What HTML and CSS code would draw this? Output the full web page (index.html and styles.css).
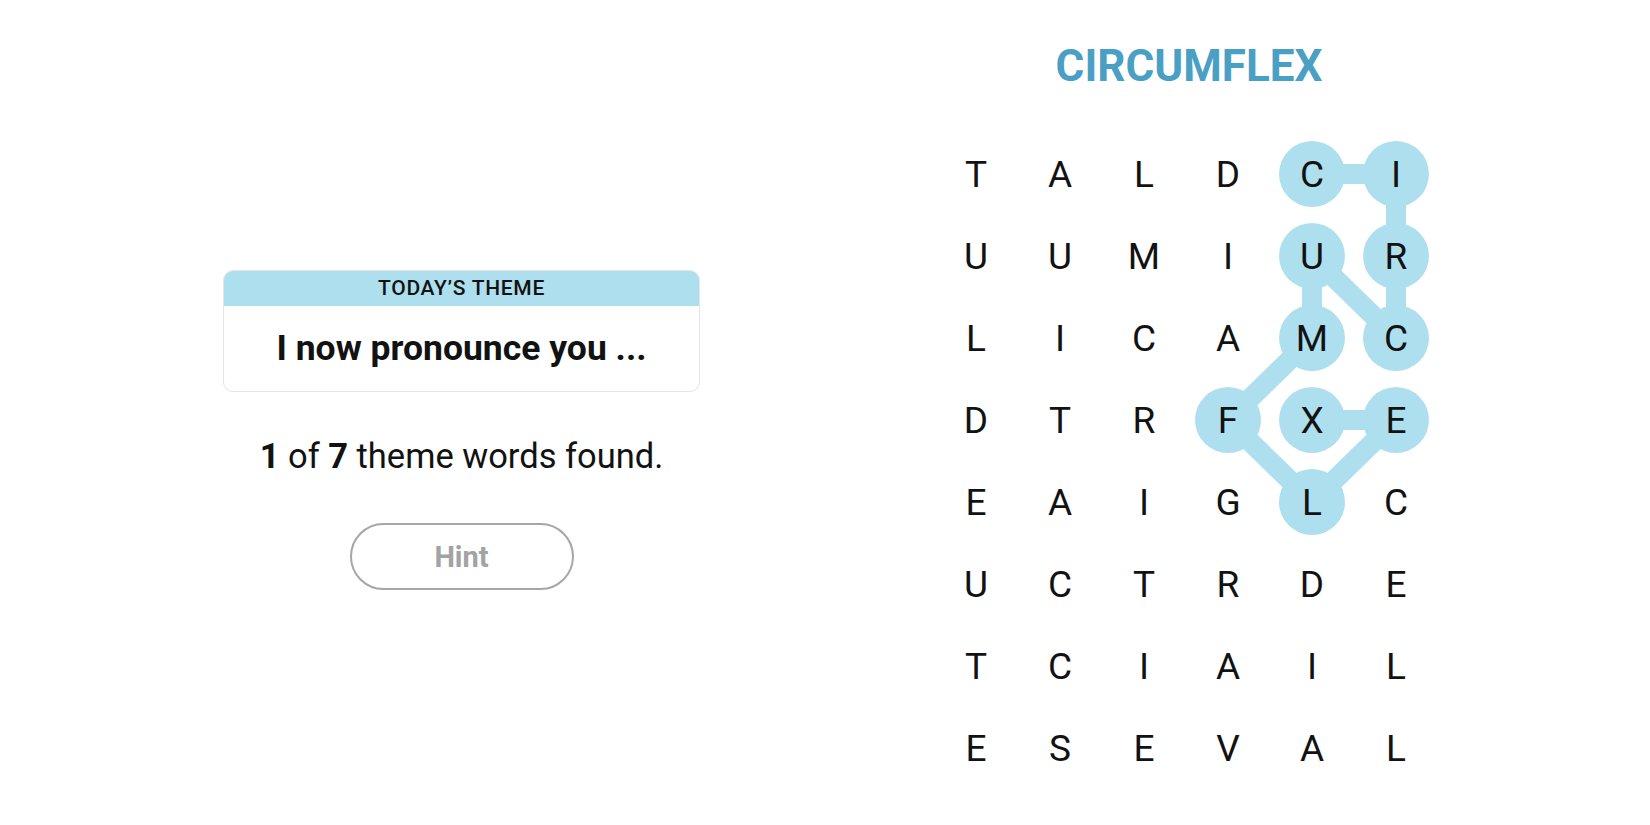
FILE: index.html
```html
<!DOCTYPE html>
<html lang="en">
<head>
<meta charset="utf-8">
<title>Strands</title>
<link rel="stylesheet" href="styles.css">
</head>
<body>
<main class="page">
  <section class="side">
    <div class="theme-card">
      <div class="theme-head">TODAY’S THEME</div>
      <div class="theme-body">I now pronounce you ...</div>
    </div>
    <p class="progress"><b>1</b> of <b>7</b> theme words found.</p>
    <button class="hint" type="button">Hint</button>
  </section>
  <section class="board">
    <h1 class="found-word">CIRCUMFLEX</h1>
    <div class="grid">
      <svg class="links" width="504" height="656" viewBox="0 0 504 656" aria-hidden="true">
        <polyline points="378,41 462,41 462,123 462,205 378,123 378,205 294,287 378,369 462,287 378,287" fill="none" stroke="#aedfee" stroke-width="20" stroke-linejoin="miter"/>
      </svg>
      <div class="cell"><span>T</span></div>
      <div class="cell"><span>A</span></div>
      <div class="cell"><span>L</span></div>
      <div class="cell"><span>D</span></div>
      <div class="cell on"><span>C</span></div>
      <div class="cell on"><span>I</span></div>

      <div class="cell"><span>U</span></div>
      <div class="cell"><span>U</span></div>
      <div class="cell"><span>M</span></div>
      <div class="cell"><span>I</span></div>
      <div class="cell on"><span>U</span></div>
      <div class="cell on"><span>R</span></div>

      <div class="cell"><span>L</span></div>
      <div class="cell"><span>I</span></div>
      <div class="cell"><span>C</span></div>
      <div class="cell"><span>A</span></div>
      <div class="cell on"><span>M</span></div>
      <div class="cell on"><span>C</span></div>

      <div class="cell"><span>D</span></div>
      <div class="cell"><span>T</span></div>
      <div class="cell"><span>R</span></div>
      <div class="cell on"><span>F</span></div>
      <div class="cell on"><span>X</span></div>
      <div class="cell on"><span>E</span></div>

      <div class="cell"><span>E</span></div>
      <div class="cell"><span>A</span></div>
      <div class="cell"><span>I</span></div>
      <div class="cell"><span>G</span></div>
      <div class="cell on"><span>L</span></div>
      <div class="cell"><span>C</span></div>

      <div class="cell"><span>U</span></div>
      <div class="cell"><span>C</span></div>
      <div class="cell"><span>T</span></div>
      <div class="cell"><span>R</span></div>
      <div class="cell"><span>D</span></div>
      <div class="cell"><span>E</span></div>

      <div class="cell"><span>T</span></div>
      <div class="cell"><span>C</span></div>
      <div class="cell"><span>I</span></div>
      <div class="cell"><span>A</span></div>
      <div class="cell"><span>I</span></div>
      <div class="cell"><span>L</span></div>

      <div class="cell"><span>E</span></div>
      <div class="cell"><span>S</span></div>
      <div class="cell"><span>E</span></div>
      <div class="cell"><span>V</span></div>
      <div class="cell"><span>A</span></div>
      <div class="cell"><span>L</span></div>
    </div>
  </section>
</main>
</body>
</html>
```
FILE: styles.css
```css
* { box-sizing: border-box; }

html, body {
  margin: 0;
  padding: 0;
  background: #ffffff;
}

body {
  font-family: Roboto, "Liberation Sans", Arial, sans-serif;
  color: #121212;
  width: 1650px;
  height: 825px;
  overflow: hidden;
}

.page {
  display: flex;
  align-items: flex-start;
  padding-left: 223px;
  gap: 234px;
}

.side {
  width: 477px;
  margin-top: 270px;
  display: flex;
  flex-direction: column;
  align-items: center;
}

.theme-card {
  width: 477px;
  border: 1px solid #e4e4e4;
  border-radius: 10px;
  overflow: hidden;
  text-align: center;
}

.theme-head {
  background: #aedfee;
  height: 35px;
  line-height: 35px;
  font-size: 21px;
  font-weight: 500;
  letter-spacing: 0.7px;
  color: #121212;
}

.theme-body {
  padding: 22px 10px 22px;
  font-size: 35.5px;
  line-height: 41px;
  font-weight: 700;
  color: #121212;
}

.progress {
  margin: 44px 0 0;
  font-size: 34.5px;
  line-height: 41px;
  color: #121212;
}

.progress b { font-weight: 700; }

.hint {
  margin-top: 46px;
  width: 224px;
  height: 67px;
  border: 2px solid #a6a6a6;
  border-radius: 34px;
  background: #ffffff;
  font-family: Roboto, "Liberation Sans", Arial, sans-serif;
  font-size: 29px;
  font-weight: 700;
  color: #a3a3a3;
  padding: 0;
}

.board {
  width: 504px;
  padding-top: 40px;
  display: flex;
  flex-direction: column;
  align-items: center;
}

.found-word {
  margin: 0;
  font-size: 44px;
  line-height: 52px;
  font-weight: 700;
  color: #4a9fc4;
  padding-left: 6px;
}

.grid {
  position: relative;
  margin-top: 41px;
  display: grid;
  grid-template-columns: repeat(6, 84px);
  grid-template-rows: repeat(8, 82px);
}

.links {
  position: absolute;
  left: 0;
  top: 0;
}

.cell {
  position: relative;
  display: flex;
  align-items: center;
  justify-content: center;
}

.cell span {
  width: 66px;
  height: 66px;
  flex: none;
  border-radius: 50%;
  display: flex;
  align-items: center;
  justify-content: center;
  font-size: 37px;
  line-height: 1;
  font-weight: 400;
  color: #121212;
}

.cell.on span {
  background: #aedfee;
}
```
